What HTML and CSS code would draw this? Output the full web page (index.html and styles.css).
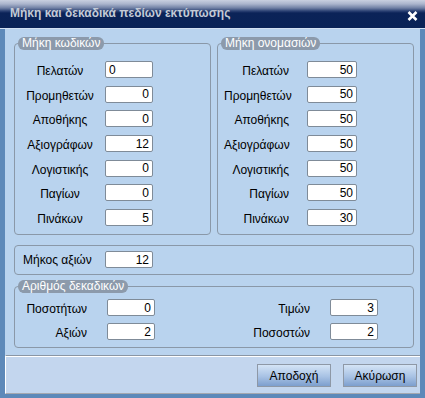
FILE: index.html
```html
<!DOCTYPE html>
<html lang="el">
<head>
    <meta charset="UTF-8">
    <title>Μήκη και δεκαδικά πεδίων εκτύπωσης</title>
    <link rel="stylesheet" href="styles.css">
</head>
<body>
    <div class="window">
        <div class="titlebar">
            <span class="title">Μήκη και δεκαδικά πεδίων εκτύπωσης</span>
            <svg class="close" width="11" height="10" viewBox="0 0 11 10">
                <path d="M1.5 1 L9.5 9 M9.5 1 L1.5 9" stroke="#fff" stroke-width="2.6" fill="none"/>
            </svg>
        </div>

        <div class="content">
            <div class="top-groups">
                <fieldset class="group">
                    <legend>Μήκη κωδικών</legend>
                    <div class="rows rows-codes">
                        <label>Πελατών</label><input type="text" class="left" value="0">
                        <label>Προμηθετών</label><input type="text" value="0">
                        <label>Αποθήκης</label><input type="text" value="0">
                        <label>Αξιογράφων</label><input type="text" value="12">
                        <label>Λογιστικής</label><input type="text" value="0">
                        <label>Παγίων</label><input type="text" value="0">
                        <label>Πινάκων</label><input type="text" value="5">
                    </div>
                </fieldset>
                <fieldset class="group">
                    <legend>Μήκη ονομασιών</legend>
                    <div class="rows rows-names">
                        <label>Πελατών</label><input type="text" value="50">
                        <label>Προμηθετών</label><input type="text" value="50">
                        <label>Αποθήκης</label><input type="text" value="50">
                        <label>Αξιογράφων</label><input type="text" value="50">
                        <label>Λογιστικής</label><input type="text" value="50">
                        <label>Παγίων</label><input type="text" value="50">
                        <label>Πινάκων</label><input type="text" value="30">
                    </div>
                </fieldset>
            </div>

            <fieldset class="group single">
                <div class="rows rows-single">
                    <label>Μήκος αξιών</label><input type="text" value="12">
                </div>
            </fieldset>

            <fieldset class="group decimals">
                <legend>Αριθμός δεκαδικών</legend>
                <div class="rows rows-decimals">
                    <label>Ποσοτήτων</label><input type="text" value="0">
                    <label>Τιμών</label><input type="text" value="3">
                    <label>Αξιών</label><input type="text" value="2">
                    <label>Ποσοστών</label><input type="text" value="2">
                </div>
            </fieldset>
        </div>

        <div class="footer">
            <button type="button">Αποδοχή</button>
            <button type="button">Ακύρωση</button>
        </div>
    </div>
</body>
</html>
```

FILE: styles.css
```css
body {
    margin: 0;
    font-family: "Liberation Sans", Arial, sans-serif;
    font-size: 12px;
    color: #000;
}

.window {
    width: 425px;
    height: 398px;
    display: flex;
    flex-direction: column;
    box-sizing: border-box;
    padding-bottom: 4px;
    background: #5d89b9;
}

/* title bar */
.titlebar {
    flex: none;
    height: 29px;
    display: flex;
    align-items: flex-start;
    justify-content: space-between;
    padding: 6px 7px 0 10px;
    box-sizing: border-box;
    border-bottom: 1px solid #d2e0f2;
    background: linear-gradient(#c9d0e0 0, #aab4cc 4px, #7080a4 8px, #2c4274 11px, #0b2358 13px, #0a2357 27px);
}
.title {
    font-weight: bold;
    font-size: 12px;
    line-height: 14px;
    color: #c3cad6;
}
.close {
    margin-top: 5px;
}

/* main area */
.content {
    flex: 1;
    margin: 0 5px;
    padding: 8px 6px 0 9px;
    background: #b9d3ee;
}

.top-groups {
    display: grid;
    grid-template-columns: 197px 197px;
    column-gap: 6px;
    height: 198px;
}

.group {
    margin: 0;
    padding: 0;
    min-width: 0;
    border: 1px solid #8a98a8;
    border-radius: 4px;
}
.group legend {
    margin-left: 3px;
    padding: 0 4px;
    height: 13px;
    line-height: 13px;
    color: #fff;
    background: #8c9aab;
    border-radius: 6px;
}

.rows {
    display: grid;
    grid-auto-rows: 17px;
}
.rows label {
    line-height: 14px;
    padding-top: 3px;
    white-space: nowrap;
}

input[type="text"] {
    box-sizing: border-box;
    width: 48px;
    height: 17px;
    margin: 0;
    padding: 0 3px;
    font-family: inherit;
    font-size: 12px;
    text-align: right;
    background: #fff;
    border: 1px solid #7f8b98;
    border-radius: 2px;
    outline: none;
}
input.left {
    text-align: left;
}

.rows-codes {
    grid-template-columns: 80px 48px;
    column-gap: 5px;
    row-gap: 7.7px;
    padding: 11px 0 8px 5px;
}
.rows-codes label {
    text-align: center;
}

.rows-names {
    grid-template-columns: 65px 50px;
    column-gap: 18px;
    row-gap: 7.7px;
    padding: 11px 0 8px 6px;
}
.rows-names label {
    text-align: right;
}
.rows-names input[type="text"] {
    width: 50px;
}

.single {
    margin-top: 10px;
}
.rows-single {
    grid-template-columns: 82px 48px;
    padding: 5px 0 6px 8px;
}
.rows-single label {
    padding-top: 2px;
}

.decimals {
    margin-top: 5px;
}
.rows-decimals {
    grid-template-columns: 72px 48px 135px 48px;
    column-gap: 20px;
    row-gap: 7px;
    padding: 6px 0 7px 0;
}
.rows-decimals label {
    text-align: right;
}

/* buttons */
.footer {
    flex: none;
    height: 39px;
    box-sizing: border-box;
    margin: 0 5px;
    display: flex;
    justify-content: flex-end;
    align-items: flex-start;
    gap: 12px;
    padding: 8px 3px 0 0;
    background: #c3d6ee;
    border-top: 1px solid #8a96a4;
    border-bottom: 1px solid #a4a8b0;
    border-left: 1px solid #fff;
    box-shadow: inset 0 1px 0 #fff;
}
.footer button {
    width: 74px;
    height: 23px;
    padding: 0;
    font-family: inherit;
    font-size: 12px;
    color: #000;
    border: 1px solid #8e98a6;
    background: linear-gradient(#d4e4f6, #a8c2e4 55%, #7d9fce);
}
```
